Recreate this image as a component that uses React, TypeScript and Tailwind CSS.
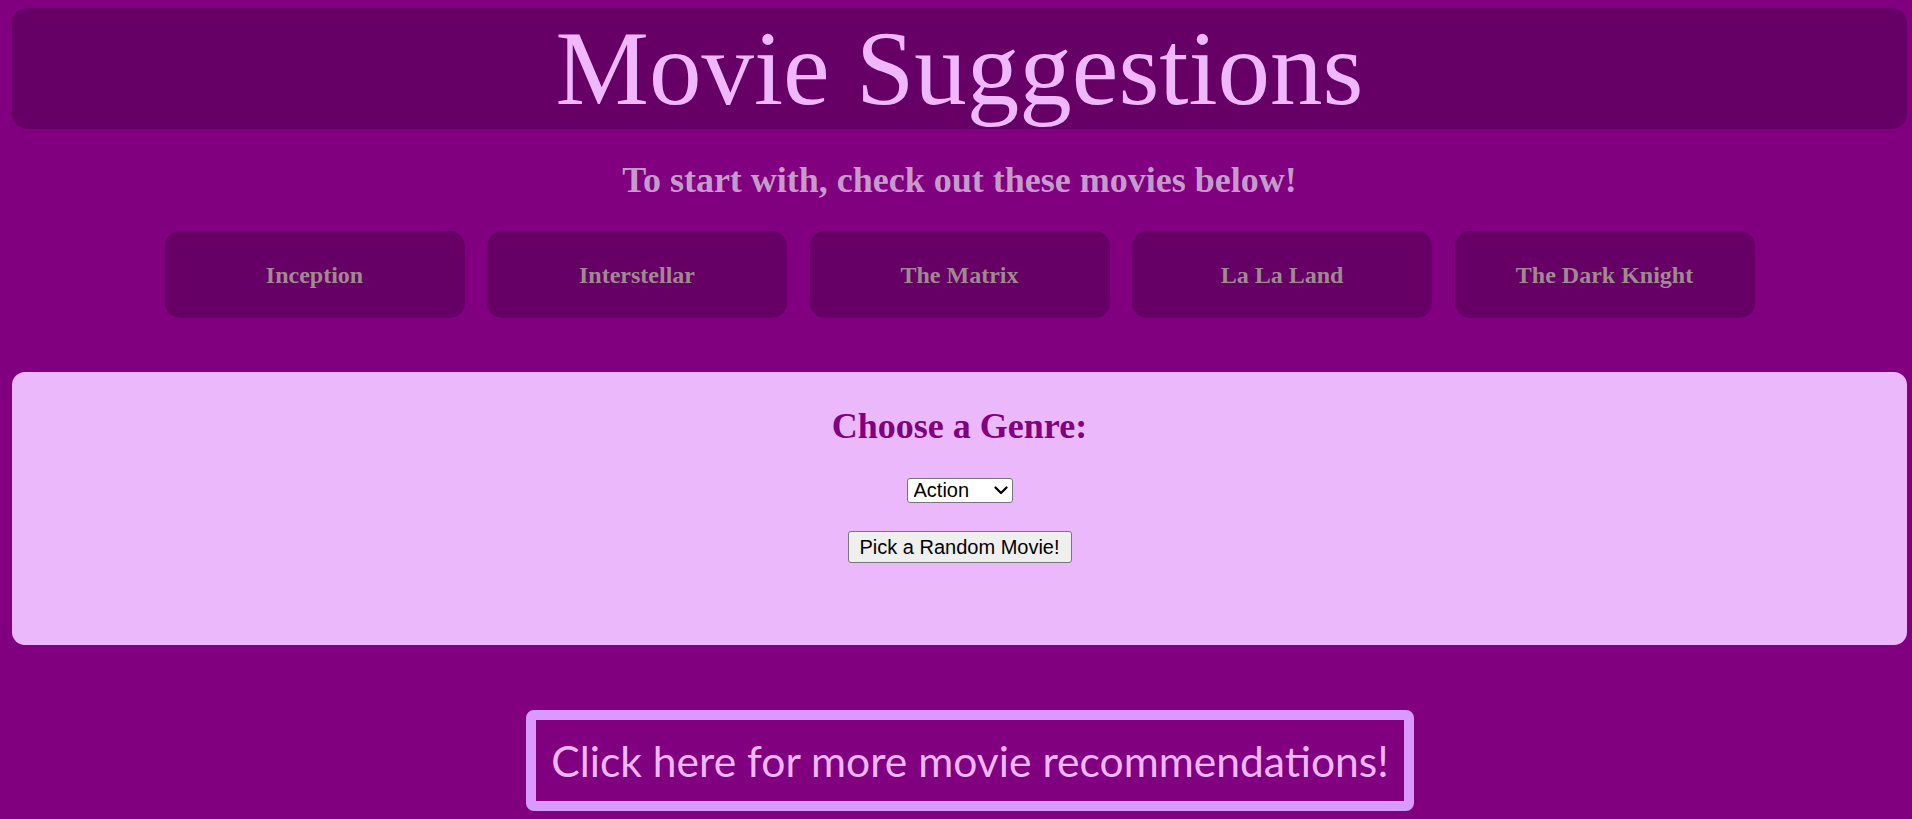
import React from "react";

const movies = ["Inception", "Interstellar", "The Matrix", "La La Land", "The Dark Knight"];

export default function App() {
  return (
    <div className="min-h-screen w-full bg-[#800080] overflow-hidden">
      <div className="ml-[12px] mr-[5px] pt-[8px]">
        <div className="h-[121px] rounded-[15px] bg-[#660066] text-center">
          <h1 className="text-[105px] leading-[121px] font-normal text-[#efb8fd] font-['Liberation_Serif',serif]">
            Movie Suggestions
          </h1>
        </div>

        <h2 className="mt-[31px] mb-[30px] text-center text-[36px] leading-[41px] font-bold text-[#c69bcb] font-['Liberation_Serif',serif]">
          To start with, check out these movies below!
        </h2>

        <div className="flex justify-center gap-[22.5px]">
          {movies.map((m) => (
            <div
              key={m}
              className="w-[300px] h-[87px] rounded-[15px] bg-[#660066] flex items-center justify-center"
            >
              <span className="text-[24px] font-bold text-[#a08a8f] font-['Liberation_Serif',serif]">{m}</span>
            </div>
          ))}
        </div>

        <div className="mt-[54px] h-[273px] rounded-[13px] bg-[#ecb8fc] flex flex-col items-center pt-[34px]">
          <h2 className="text-[36px] leading-[41px] font-bold text-[#800080] font-['Liberation_Serif',serif]">
            Choose a Genre:
          </h2>
          <div className="relative mt-[31px] w-[106px] h-[25px]">
            <select
              defaultValue="Action"
              className="appearance-none w-full h-full bg-white border border-[#767676] rounded-[3px] text-[20px] leading-[23px] text-black font-['Liberation_Sans',Arial,sans-serif] pl-[6px] pr-[20px] outline-none"
            >
              <option>Action</option>
              <option>Comedy</option>
              <option>Drama</option>
              <option>Sci-Fi</option>
              <option>Romance</option>
            </select>
            <svg
              className="pointer-events-none absolute right-[5px] top-[8px]"
              width="14"
              height="9"
              viewBox="0 0 14 9"
              fill="none"
            >
              <path d="M1.5 1.5 L7 7 L12.5 1.5" stroke="#000" strokeWidth="2.2" strokeLinecap="round" strokeLinejoin="round" />
            </svg>
          </div>
          <button className="mt-[28px] w-[224px] h-[32px] bg-[#efefef] border border-[#767676] rounded-[3px] text-[20px] leading-[23px] text-black font-['Liberation_Sans',Arial,sans-serif]">
            Pick a Random Movie!
          </button>
        </div>

        <div className="mt-[65px] flex justify-center">
          <a
            href="#"
            className="ml-[21px] h-[101px] w-[888px] border-[10px] border-[#d99aff] rounded-[8px] bg-[#800080] flex items-center justify-center whitespace-nowrap text-[42.6px] text-[#efb7fd] no-underline font-['Lato',sans-serif]"
          >
            Click here for more movie recommendations!
          </a>
        </div>
      </div>
    </div>
  );
}
